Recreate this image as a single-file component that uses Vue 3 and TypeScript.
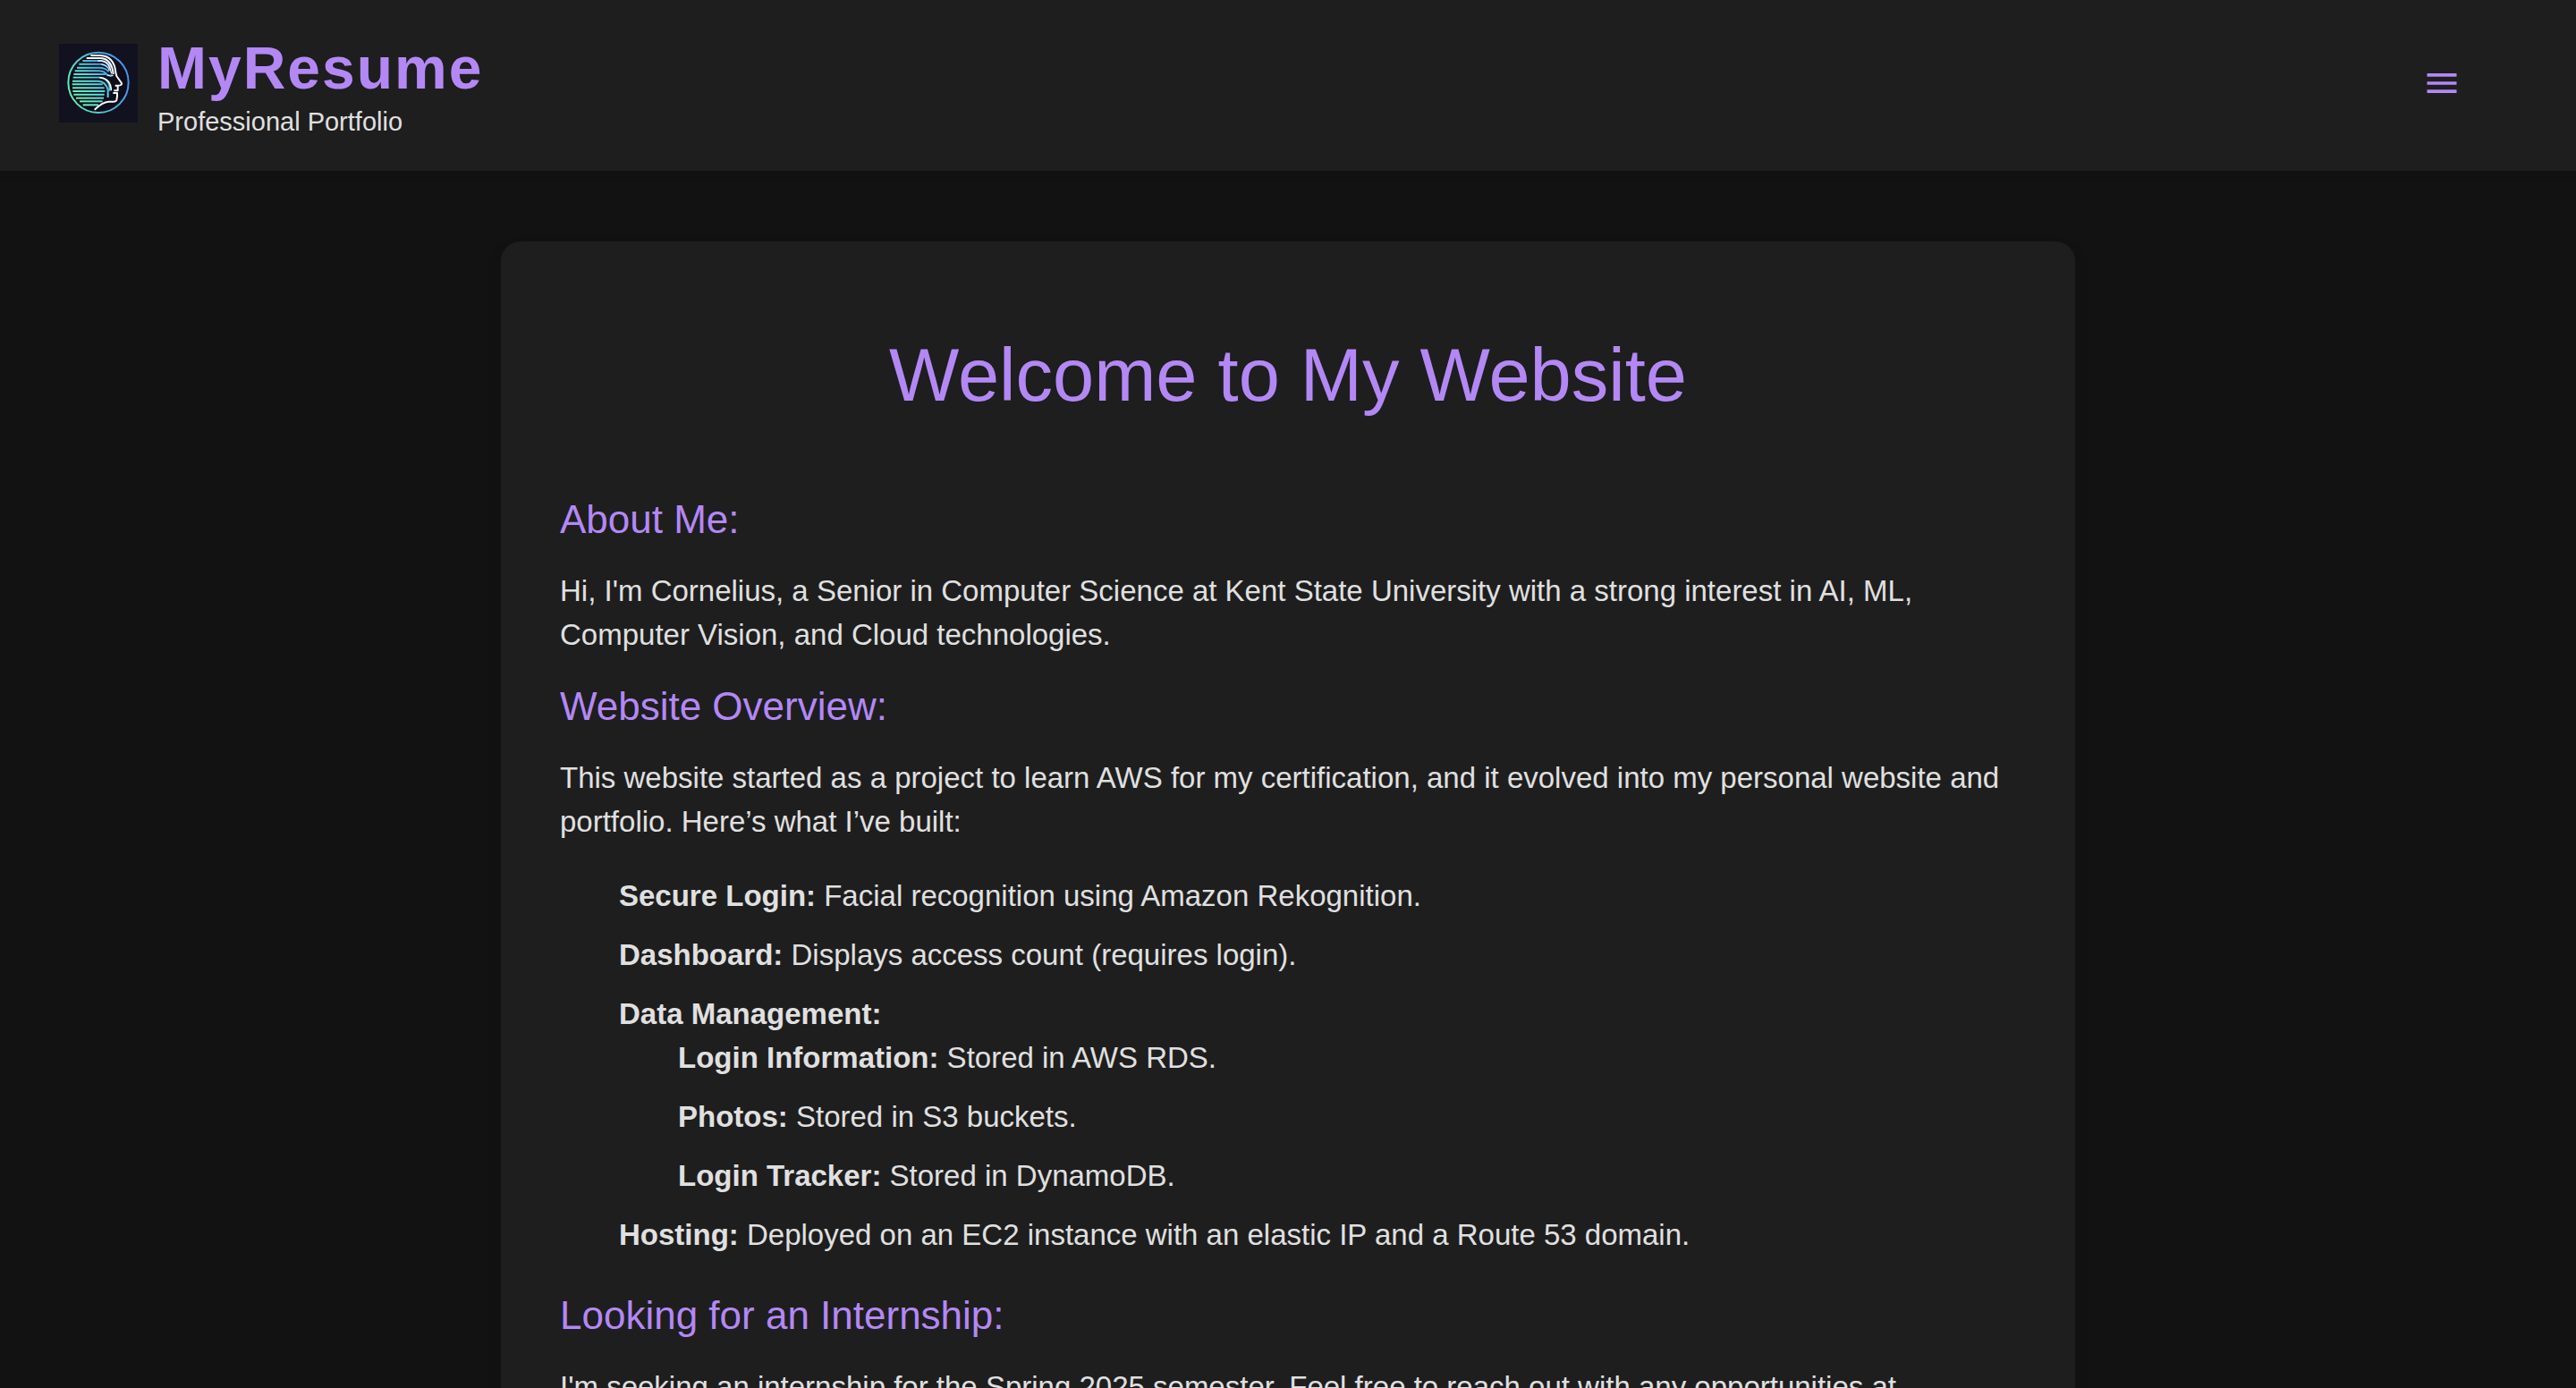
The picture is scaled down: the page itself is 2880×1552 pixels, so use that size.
<script setup lang="ts">
import { ref } from 'vue'

interface Entry {
  label: string
  text?: string
  children?: Entry[]
}

const menuOpen = ref(false)

const features: Entry[] = [
  { label: 'Secure Login:', text: 'Facial recognition using Amazon Rekognition.' },
  { label: 'Dashboard:', text: 'Displays access count (requires login).' },
  {
    label: 'Data Management:',
    children: [
      { label: 'Login Information:', text: 'Stored in AWS RDS.' },
      { label: 'Photos:', text: 'Stored in S3 buckets.' },
      { label: 'Login Tracker:', text: 'Stored in DynamoDB.' },
    ],
  },
  { label: 'Hosting:', text: 'Deployed on an EC2 instance with an elastic IP and a Route 53 domain.' },
]
</script>

<template>
  <div class="page">
    <header class="header">
      <div class="brand">
        <svg class="logo" viewBox="48 58 264 264" aria-hidden="true">
          <defs>
            <linearGradient id="ring" gradientUnits="userSpaceOnUse" x1="80" y1="230" x2="282" y2="150">
              <stop offset="0" stop-color="#66f0ae" />
              <stop offset="0.45" stop-color="#4fc0d8" />
              <stop offset="1" stop-color="#4092ea" />
            </linearGradient>
            <linearGradient id="bars" gradientUnits="userSpaceOnUse" x1="100" y1="240" x2="215" y2="130">
              <stop offset="0" stop-color="#6af5b8" />
              <stop offset="0.5" stop-color="#58dcdc" />
              <stop offset="1" stop-color="#3f93dc" />
            </linearGradient>
          </defs>
          <rect x="48" y="58" width="264" height="264" fill="#121120" />
          <circle cx="180" cy="188" r="101" fill="#0e0d1b" stroke="url(#ring)" stroke-width="6" />
          <g fill="none" stroke="url(#bars)" stroke-width="6">
            <path d="M127 115H190Q212 117 222 136" />
            <path d="M115 126H188Q210 128 220 147" />
            <path d="M108 138H186Q205 139 215 152" />
            <path d="M101 149H184Q202 150 211 164H228" />
            <path d="M97 160H205" />
            <path d="M95 171H184Q210 173 217 200V216" stroke-width="5" />
            <path d="M93 183H180Q204 184 212 212V238" />
            <path d="M92 194H194" />
            <path d="M93 206H200" />
            <path d="M94 217H202" />
            <path d="M97 228H200" />
            <path d="M105 240H198" />
            <path d="M117 251H194" />
            <path d="M128 263H180" />
          </g>
          <g fill="none" stroke="#f8fafc" stroke-width="6" stroke-linejoin="round">
            <path d="M154 97H187C219 99 235 121 238 154L241 166L258 190Q259 198 246 198H236M245 198V215H232M229 223H243V233L241 247Q239 252 230 252H214Q194 253 167 279" />
            <path d="M140 106H188C213 108 227 127 230 160" />
            <path d="M178 115H192C209 118 220 133 224 158" stroke-width="4" />
            <path d="M190 126Q209 130 217 148" stroke-width="3" />
            <path d="M184 171C208 173 222 186 223 215" stroke-width="5" />
            <path d="M210 162Q220 170 230 164" stroke-width="3" />
          </g>
        </svg>
        <div class="brand-text">
          <div class="brand-name">MyResume</div>
          <div class="brand-tagline">Professional Portfolio</div>
        </div>
      </div>
      <button
        class="menu-button"
        type="button"
        aria-label="Open menu"
        :aria-expanded="menuOpen"
        @click="menuOpen = !menuOpen"
      >
        <svg class="menu-icon" viewBox="0 0 24 24" aria-hidden="true">
          <path d="M3 18h18v-2H3v2zm0-5h18v-2H3v2zm0-7v2h18V6H3z" fill="currentColor" />
        </svg>
      </button>
    </header>

    <main class="card">
      <h1>Welcome to My Website</h1>

      <h2>About Me:</h2>
      <p>
        Hi, I'm Cornelius, a Senior in Computer Science at Kent State University with a strong interest in AI, ML,
        Computer Vision, and Cloud technologies.
      </p>

      <h2>Website Overview:</h2>
      <p>
        This website started as a project to learn AWS for my certification, and it evolved into my personal website and
        portfolio. Here’s what I’ve built:
      </p>
      <ul class="features">
        <li v-for="item in features" :key="item.label">
          <strong>{{ item.label }}</strong> {{ item.text }}
          <ul v-if="item.children">
            <li v-for="child in item.children" :key="child.label">
              <strong>{{ child.label }}</strong> {{ child.text }}
            </li>
          </ul>
        </li>
      </ul>

      <h2>Looking for an Internship:</h2>
      <p>
        I'm seeking an internship for the Spring 2025 semester. Feel free to reach out with any opportunities at
      </p>
    </main>
  </div>
</template>

<style>
body {
  background: #121212;
}
</style>

<style scoped>
.page {
  display: flow-root;
  min-height: 100vh;
  background: #121212;
  color: #e0e0e0;
  font-family: "Liberation Sans", Arial, Helvetica, sans-serif;
  font-size: 33px;
  line-height: 49px;
}

.header {
  display: flex;
  align-items: center;
  justify-content: space-between;
  padding: 33px 110px 38px 66px;
  background: #1e1e1e;
  box-shadow: 0 4px 10px rgba(0, 0, 0, 0.1);
}

.brand {
  display: flex;
  align-items: center;
  gap: 22px;
}

.logo {
  width: 88px;
  height: 88px;
}

.brand-name {
  color: #b388f5;
  font-size: 66px;
  font-weight: 700;
  line-height: 86px;
  letter-spacing: 2px;
}

.brand-tagline {
  font-size: 29px;
  line-height: 34px;
}

.menu-button {
  display: flex;
  padding: 18px;
  border: 0;
  background: none;
  color: #b388f5;
  cursor: pointer;
}

.menu-icon {
  width: 44px;
  height: 44px;
}

.card {
  box-sizing: border-box;
  max-width: 1760px;
  margin: 79px auto;
  padding: 66px;
  border-radius: 22px;
  background: #1e1e1e;
  box-shadow: 0 8px 18px rgba(0, 0, 0, 0.1);
}

h1 {
  margin: 22px 0 65px;
  color: #b388f5;
  font-size: 83px;
  font-weight: 400;
  line-height: 124px;
  text-align: center;
}

h2 {
  margin: 22px 0;
  color: #b388f5;
  font-size: 44px;
  font-weight: 400;
  line-height: 67px;
}

p {
  margin: 22px 0;
}

ul {
  margin: 0;
  padding-left: 66px;
  list-style: none;
}

.features {
  margin: 34px 0 32px;
}

li {
  margin-bottom: 17px;
}
</style>
